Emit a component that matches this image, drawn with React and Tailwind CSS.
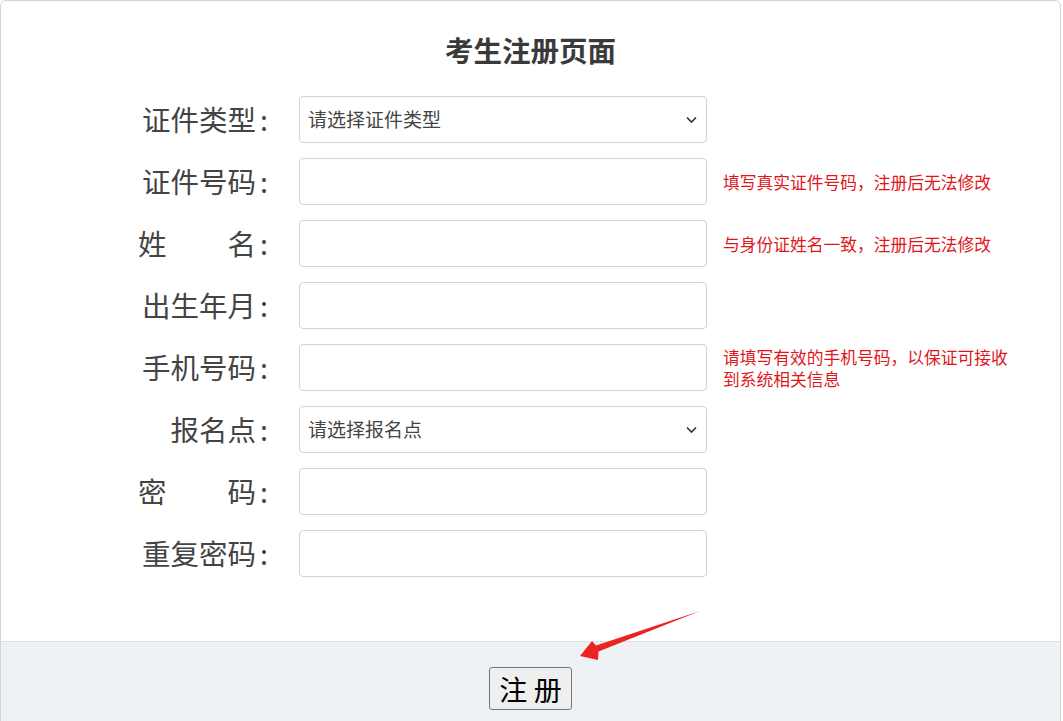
import React from "react";

const fields = [
    { label: "证件类型", type: "select", placeholder: "请选择证件类型" },
    { label: "证件号码", hint: "填写真实证件号码，注册后无法修改" },
    { label: ["姓", "名"], hint: "与身份证姓名一致，注册后无法修改" },
    { label: "出生年月" },
    { label: "手机号码", hint: "请填写有效的手机号码，以保证可接收到系统相关信息" },
    { label: "报名点", type: "select", placeholder: "请选择报名点" },
    { label: ["密", "码"], type: "password" },
    { label: "重复密码", type: "password" },
];

function Colon() {
    return <span className="pl-[4px]">:</span>;
}

function FieldRow({ field }) {
    return (
        <div className="flex items-center">
            <label className="w-[130px] text-[28.5px] text-[#444] leading-none">
                {Array.isArray(field.label) ? (
                    <span className="flex justify-between">
                        <span>{field.label[0]}</span>
                        <span>{field.label[1]}<Colon /></span>
                    </span>
                ) : (
                    <span className="block text-right">{field.label}<Colon /></span>
                )}
            </label>
            {field.type === "select" ? (
                <div className="relative ml-[31px] w-[408px] h-[47px]">
                    <select
                        defaultValue=""
                        className="appearance-none w-full h-full border border-[#ced4da] rounded bg-white pl-[8px] pr-8 text-[19px] text-[#444] outline-none"
                    >
                        <option value="">{field.placeholder}</option>
                    </select>
                    <svg
                        className="absolute right-[10px] top-1/2 -translate-y-1/2 pointer-events-none"
                        width="11" height="7" viewBox="0 0 11 7"
                    >
                        <path d="M1 1l4.5 4.5L10 1" fill="none" stroke="#333" strokeWidth="1.6" />
                    </svg>
                </div>
            ) : (
                <input
                    type={field.type || "text"}
                    className="ml-[31px] w-[408px] h-[47px] border border-[#ced4da] rounded bg-white px-2 text-[19px] outline-none"
                />
            )}
            {field.hint && (
                <div className="ml-[16px] w-[292px] text-[16.75px] leading-[22px] text-[#e0161b]">
                    {field.hint}
                </div>
            )}
        </div>
    );
}

export default function App() {
    return (
        <div
            className="relative w-full h-[721px] bg-white overflow-hidden"
            style={{ fontFamily: '"Noto Sans CJK SC", "Noto Sans", sans-serif' }}
        >
            <div className="w-[1061px] h-[740px] border border-[#c8d8e2] rounded-t-md flex flex-col">
                <h1 className="pt-[29px] text-center text-[28.5px] leading-[40px] font-bold text-[#3a3a3a]">
                    考生注册页面
                </h1>
                <div className="pt-[26px] pl-[137px] flex flex-col gap-[15px]">
                    {fields.map((f, i) => (
                        <FieldRow key={i} field={f} />
                    ))}
                </div>
                <div className="mt-[64px] border-t border-[#dcdfe3] bg-[#eff2f5] flex-1 flex justify-center pt-[25px]">
                    <button className="h-[43px] w-[83px] border border-[#767676] rounded-[3px] bg-[#efefef] text-[28px] leading-none text-black">
                        注 册
                    </button>
                </div>
            </div>
            <svg className="absolute left-0 top-0 pointer-events-none" width="1063" height="721">
                <polygon
                    points="580,656 592,641 596,645.5 700,611 598.5,651.5 598,660"
                    fill="#ec2320"
                />
            </svg>
        </div>
    );
}
